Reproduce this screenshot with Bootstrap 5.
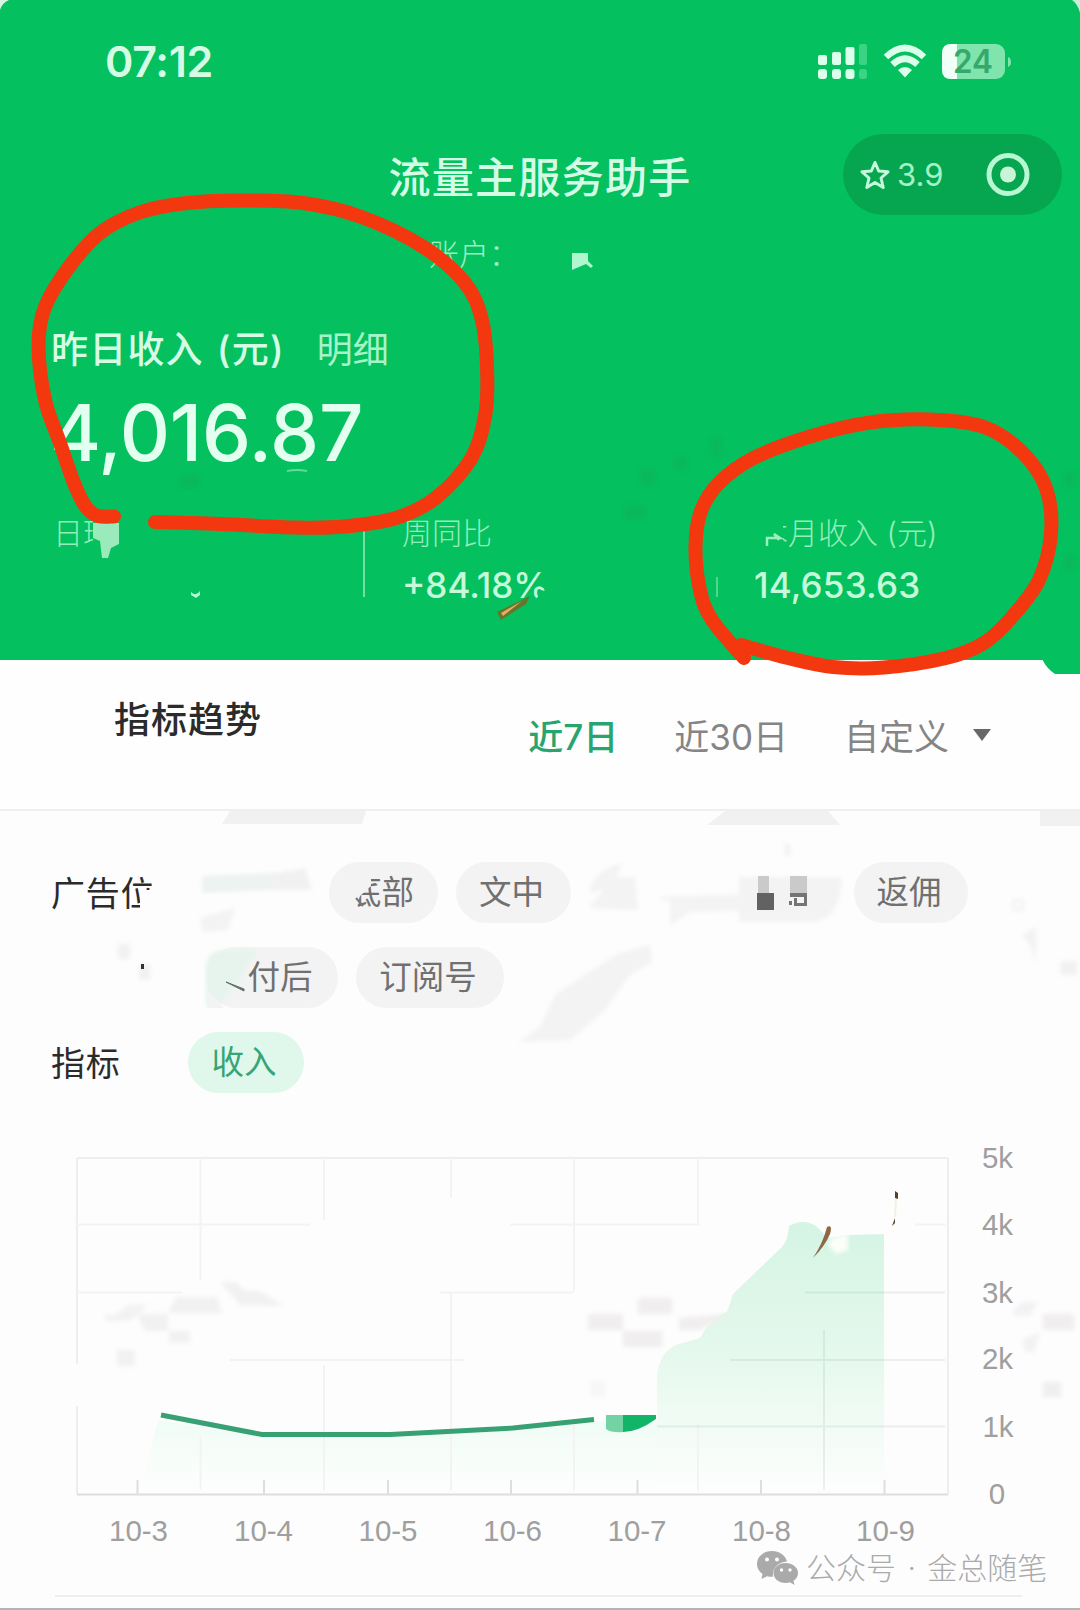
<!DOCTYPE html>
<html lang="zh-CN">
<head>
<meta charset="utf-8">
<meta name="viewport" content="width=device-width, initial-scale=1">
<title>流量主服务助手</title>
<link href="https://cdn.jsdelivr.net/npm/bootstrap@5.3.0/dist/css/bootstrap.min.css" rel="stylesheet">
<style>
body{width:1080px;height:1610px;overflow:hidden;background:#fdfdfd;font-family:Inter,"Noto Sans CJK SC",sans-serif;color:#2b2b2b}
.screen{height:1610px;overflow:hidden;border-bottom:2px solid #b5b5b5}
.hero{height:660px;background:#05c05e;color:#d5fde6}
.status{height:124px;padding:0 69px 0 105px}
.clock{font-size:43px;font-weight:600;letter-spacing:-.3px;line-height:62px;margin-top:-2px}
.titlebar{height:101px;padding-right:18px}
.side{flex:1 1 0}
.app-name{font-size:42px;font-weight:500;letter-spacing:1.3px;padding:5px 0 0 18px}
.capsule{width:219px;height:81px;background:#06a650;padding:0 32px 0 17px}
.rate{font-size:31px;line-height:40px;color:#a3f3c6;margin-left:7px}
.account{height:58px;line-height:59px;font-size:30px;font-weight:300;padding-left:429px;color:#a0f0c3}
.income-head{height:66px;margin-top:34px;padding-left:51px;gap:32px}
.income-label{font-size:37px;font-weight:500;line-height:66px;word-spacing:2px;letter-spacing:1.2px}
.income-link{font-size:36px;color:#a5f4c9;line-height:66px}
.amount{height:100px;line-height:100px;font-size:78px;font-weight:500;padding-left:50px;letter-spacing:-.2px;color:#e2fff0}
.stats{margin-top:24px;padding-left:53px}
.stat-name{font-size:30px;line-height:52px;font-weight:300;color:#93eebb}
.stat-num{font-size:35px;line-height:52px;font-weight:500;color:#c5fadb}
.s1{width:310px}.s2{width:351px;padding-left:37px}
.rule{width:2px;height:66px;margin-top:24px;background:#74dfa4}
.rule-short{width:2px;height:20px;margin-top:70px;background:#4fd78c}
.s3{padding-left:36px}
.s3 .stat-num{letter-spacing:.2px}
.trend{height:151px;border-bottom:2px solid #efefef;padding:0 89px 0 114px;background:#fefefe}
.trend-title{font-size:36px;font-weight:500;line-height:120px;letter-spacing:1px}
.tabs{font-size:35px;line-height:154px;color:#858585}
.tabs .on{color:#28a46f;font-weight:500}
.filters{padding:51px 0 0 51px;height:303px}
.lab{font-size:34px;line-height:64px;height:61px;letter-spacing:.8px}
.chip{height:61px;line-height:62px;border-radius:31px;background:#f3f3f3;color:#707070;font-size:32.5px;text-align:center}
.chip.on{background:#e0f7ec;color:#35a576}
.chip.wide{padding-right:4px}
.line1{margin-bottom:24px}
.chart text{font-family:"Liberation Sans",Arial,sans-serif;font-size:29.5px;fill:#9f9f9f}
.wm{height:50px;padding-left:757px;margin-top:-37px;color:#aaa;font-size:30px;font-weight:300;line-height:50px;word-spacing:3px}
.endline{height:2px;width:967px;margin:2px 0 0 55px;background:#efefef}
.ink{position:absolute;left:0;top:0;pointer-events:none}
</style>
<script src="https://cdn.jsdelivr.net/npm/bootstrap@5.3.0/dist/js/bootstrap.bundle.min.js"></script>
</head>
<body>
<main class="screen position-relative">
<header class="hero">
  <div class="status d-flex align-items-center justify-content-between">
    <span class="clock">07:12</span>
    <svg width="194" height="38" viewBox="817 43 194 38">
      <g fill="#dcffec"><rect x="818" y="55" width="9" height="10" rx="2"/><rect x="832" y="52" width="9" height="13" rx="2"/><rect x="845.500" y="47" width="9" height="18" rx="2"/><rect x="818" y="69" width="9" height="10" rx="3"/><rect x="832" y="69" width="9" height="10" rx="3"/><rect x="845.500" y="69" width="9" height="10" rx="3"/></g>
      <g fill="#3dd384"><rect x="859" y="44" width="8" height="21" rx="2"/><rect x="859" y="69" width="8" height="10" rx="3"/></g>
      <g fill="none" stroke="#dcffec" stroke-width="6.500"><path d="M886 57Q905 39 924 57"/><path d="M892.500 64.500Q905 53 917.500 64.500"/></g>
      <path d="M905 77.500L898 70Q905 64 912 70Z" fill="#dcffec"/>
      <rect x="942" y="44" width="63" height="35" rx="9" fill="#7fe5ac"/><path d="M951 44H957V79H951Q942 79 942 70V53Q942 44 951 44Z" fill="#f0fff7"/><path d="M1008 57Q1011 58 1011 62T1008 67Z" fill="#7fe5ac"/>
      <text x="953" y="73" font-family="Inter" font-weight="600" font-size="32" textLength="40" lengthAdjust="spacingAndGlyphs" fill="#35a86b">24</text>
    </svg>
  </div>
  <div class="titlebar d-flex align-items-center">
    <div class="side"></div>
    <div class="app-name">流量主服务助手</div>
    <div class="side d-flex justify-content-end">
      <div class="capsule rounded-pill d-flex align-items-center">
        <svg width="30" height="30" viewBox="0 0 30 30"><path d="M15 2.500L18.700 11L28 11.800L21 18L23.200 27.500L15 22.500L6.800 27.500L9 18L2 11.800L11.300 11Z" fill="none" stroke="#c4fadb" stroke-width="3" stroke-linejoin="round"/></svg>
        <span class="rate">3.9</span>
        <svg class="ms-auto" width="44" height="44" viewBox="0 0 44 44"><circle cx="22" cy="21.500" r="19" fill="none" stroke="#b7f7d2" stroke-width="5"/><circle cx="22" cy="21.500" r="8" fill="#c9f5d7"/></svg>
      </div>
    </div>
  </div>
  <div class="account">账户：</div>
  <div class="income-head d-flex"><span class="income-label">昨日收入 (元)</span><span class="income-link">明细</span></div>
  <div class="amount">4,016.87</div>
  <div class="stats d-flex">
    <div class="s1"><div class="stat-name">日环</div></div>
    <div class="rule"></div>
    <div class="s2"><div class="stat-name">周同比</div><div class="stat-num">+84.18%</div></div>
    <div class="rule-short"></div>
    <div class="s3"><div class="stat-name"><span class="ms-1">本月收入 (元)</span></div><div class="stat-num">14,653.63</div></div>
  </div>
</header>
<section class="trend d-flex justify-content-between">
  <div class="trend-title">指标趋势</div>
  <div class="tabs d-flex"><span class="on">近7日</span><span class="ms-5 ps-2">近30日</span><span class="ms-5 ps-2">自定义</span><svg class="align-self-center ms-4" width="18" height="12"><path d="M0 0H18L9 12Z" fill="#686868"/></svg></div>
</section>
<section class="filters">
  <div class="d-flex line1"><div class="lab" style="width:278px">广告位</div><div class="chip wide" style="width:109px">底部</div><div class="chip wide" style="width:115px;margin-left:18px">文中</div><div class="chip wide" style="width:114px;margin-left:283px">返佣</div></div>
  <div class="d-flex line1" style="padding-left:155px"><div class="chip ps-3" style="width:132px">付后</div><div class="chip wide" style="width:148px;margin-left:18px">订阅号</div></div>
  <div class="d-flex"><div class="lab" style="width:137px">指标</div><div class="chip on wide" style="width:116px">收入</div></div>
</section>
<svg class="chart d-block" width="1080" height="466" viewBox="0 1114 1080 466">
  <defs><linearGradient id="area" x1="0" y1="1220" x2="0" y2="1490" gradientUnits="userSpaceOnUse"><stop offset="0" stop-color="#d4f4e4"/><stop offset=".45" stop-color="#e3f8ec"/><stop offset=".75" stop-color="#f1fbf5"/><stop offset="1" stop-color="#fdfefd"/></linearGradient>
  <linearGradient id="low" x1="0" y1="1415" x2="0" y2="1490" gradientUnits="userSpaceOnUse"><stop offset="0" stop-color="#effcf5"/><stop offset="1" stop-color="#fdfefd"/></linearGradient>
  <filter id="soft" x="-10%" y="-10%" width="120%" height="120%"><feGaussianBlur stdDeviation="2"/></filter></defs>
  <path d="M140 1490L158 1420L262 1436H390L593 1421H660V1490Z" fill="url(#low)"/>
  <path d="M657 1490V1375Q660 1352 676 1345L700 1338Q712 1316 727 1312L733 1294L760 1268L782 1247Q788 1240 789 1226Q803 1218 816 1226L828 1238L848 1235L884 1234V1490Z" fill="url(#area)"/>
  <path d="M832 1238L848 1233V1250L836 1254L828 1245Z" fill="#fbfef9" filter="url(#soft)"/>
  <g stroke="#eeeeee" stroke-width="2" fill="none">
    <path d="M77 1158H948M948 1158V1494M77 1158V1364M77 1406V1494"/>
    <path d="M77 1224.500H310M510 1224.500H700M915 1224.500H945M77 1292.500H182M440 1292.500H573M230 1360H465" stroke="#f3f3f3"/>
    <path d="M200.500 1158V1280M200.500 1436V1490M324 1158V1220M324 1365V1490M451 1158V1198M451 1292V1490M574 1158V1292M574 1424V1490M698 1158V1224M698 1424V1490" stroke="#f3f3f3"/>
    <path d="M805 1292.500H945M730 1360H945M657 1426.500H945M824 1330V1490" stroke="#789b89" stroke-opacity=".14"/>
    <path d="M77 1494.500H948M137.500 1480V1494M264 1480V1494M388 1480V1494M511 1480V1494M637.500 1480V1494M761 1480V1494M884.500 1480V1494" stroke="#dedede"/>
  </g>
  <g fill="#f1f1f1" filter="url(#soft)"><path d="M176 1297H217L222 1313H168ZM220 1282H236L245 1291H260L283 1306L240 1305ZM137 1314H168V1331H145ZM169 1331H190V1343H169ZM117 1350H135V1366H117Z"/></g>
  <g fill="#f0eeee" filter="url(#soft)"><path d="M588 1314H623V1330H588ZM638 1298H672V1314H638ZM623 1331H662V1347H623ZM679 1318L729 1314L700 1330H679ZM1043 1314H1074V1330H1043ZM1043 1382H1061V1397H1043Z"/><path d="M590 1381H606V1397H590Z" opacity=".4"/></g>
  <path d="M161 1415L262 1434.500H390L513 1428L594 1419.500" fill="none" stroke="#38a173" stroke-width="5"/>
  <path d="M606 1415H623V1432Q612 1433 606 1429Z" fill="#74d3a4"/><path d="M623 1415H656V1419Q638 1432 623 1432Z" fill="#12b568"/>
  <path d="M813 1258Q823 1243 827 1227Q833 1224 830 1234Q825 1246 813 1258Z" fill="#8d6843"/><path d="M895 1191L898 1193L898 1199L895 1198ZM895 1218V1223L892 1226Z" fill="#54422f"/>
  <path d="M896 1199L895 1217" stroke="#f5f0e4" stroke-width="2"/>
  <g text-anchor="middle"><text x="138.500" y="1541">10-3</text><text x="263.500" y="1541">10-4</text><text x="388" y="1541">10-5</text><text x="512.500" y="1541">10-6</text><text x="637" y="1541">10-7</text><text x="761.500" y="1541">10-8</text><text x="885.500" y="1541">10-9</text>
  <text x="997.500" y="1168">5k</text><text x="997.500" y="1235">4k</text><text x="997.500" y="1302.500">3k</text><text x="997.500" y="1369">2k</text><text x="998" y="1436.500">1k</text><text x="997" y="1504">0</text></g>
</svg>
<div class="wm d-flex align-items-center position-relative"><svg width="41" height="34" viewBox="0 0 41 34"><path d="M15 0C6.500 0 0 5.700 0 13C0 17 2 20.500 5.500 23L4.500 28L10 25.200Q13 26 16 25.800C15 17 21 11 30 10.500C28.500 4.500 22.500 0 15 0Z" fill="#aaa"/><path d="M28.500 12C21.500 12 16.500 16.500 16.500 22C16.500 27.800 22 32 28.500 32Q31 32 33 31.300L37.500 34L36.500 29.800C39.500 27.800 41 25 41 22C41 16.500 35.500 12 28.500 12Z" fill="#aaa"/><g fill="#fff"><circle cx="10" cy="8.500" r="2"/><circle cx="20" cy="8.500" r="2"/><circle cx="24.500" cy="19" r="1.700"/><circle cx="33" cy="19" r="1.700"/></g></svg><span class="ms-2">公众号 · 金总随笔</span></div>
<div class="endline position-relative"></div>

<svg class="ink" width="1080" height="1610" viewBox="0 0 1080 1610">
  <path d="M0 0H9Q2 3 0 10Z" fill="#d9f5e5"/><path d="M1080 0H1072Q1078 4 1080 13Z" fill="#c7efd8"/>
  <path d="M1042 659H1080V674H1055Q1047 669 1042 659Z" fill="#05c05e"/>
  <path d="M572 253H588V261L593 266L591 268L586 264L572 270Z" fill="#b0f7d0"/>
  <path d="M287 471Q297 469 307 471" stroke="#5edc98" stroke-width="2" fill="none"/>
  <path d="M96 518H124V566H96Z" fill="#05c05e"/><path d="M93 523H119V544L111 548L108 558H102L100 541L93 538Z" fill="#9beabb"/>
  <path d="M191 592Q196 597 200 591V595L196 598L191 595Z" fill="#b9f7d2"/>
  <path d="M548 565V592L541 590L536 600H552V565Z" fill="#05c05e"/>
  <path d="M750 514H783V552H750Z" fill="#05c05e"/><path d="M767 546V538H780L774 534L779 540" stroke="#9af0c0" stroke-width="2.500" fill="none"/>
  <path d="M497 612L530 596L526 604L501 620Z" fill="#66752c"/><path d="M501 613L522 601L503 616Z" fill="#e9ac63"/>
  <g fill="#0ab258" opacity=".55" filter="url(#soft)"><path d="M710 437H722V457H710ZM674 456H688V470H674ZM640 470H655V485H640ZM624 506H645V519H624ZM1064 472H1075V487H1064ZM1064 555H1075V570H1064ZM180 475H200V488H180Z"/></g>
  <g fill="#f1f1f1"><path d="M230 811H366L362 824H222ZM725 811H828L840 825H707ZM1040 811H1080V826H1040Z"/>
  <g filter="url(#soft)"><path d="M272 874L305 868L312 890H272Z"/><path d="M200 918L235 908L228 930L203 932ZM589 893Q594 869 623 863L616 877H635L638 910L589 908L604 889ZM661 897L754 894L746 910L690 912L670 925V900H661ZM739 877H842Q841 920 812 922H739ZM555 995L617 954L650 945L652 962L630 975L605 1010L570 1040L518 1042L540 1027Z" opacity=".85"/>
  <path d="M118 944H130V959H118ZM139 964H150V980H139ZM1061 961H1077V975H1061ZM785 844H790V856H785Z"/></g></g>
  <path d="M202 876L275 873V890L202 893Z" fill="#edf3f0" filter="url(#soft)"/>
  <path d="M206 1005V963Q210 950 225 950H258L245 970L232 990L218 1006Z" fill="#e6f4ed" filter="url(#soft)"/><path d="M226 982L244 989V991Z" fill="#5e7068" stroke="#5e7068"/>
  <path d="M207 990V1008H224Z" fill="#f3f3f3"/>
  <path d="M143 890H160V913H140V900Z" fill="#fdfdfd"/><path d="M141 964h3v5h-3z" fill="#333"/>
  <path d="M350 872H371V886L360 896L356 908H350Z" fill="#f3f3f3"/><path d="M356 898L363 906" stroke="#777" stroke-width="2"/>
  <path d="M758 876H769V893H758ZM790 876H807V893H790Z" fill="#cacaca"/><path d="M757 893H774V910H757Z" fill="#626262"/><path d="M790 893H807V897H790ZM804 893H807V906H804ZM794 898H797V906H794ZM794 903H806V906H794ZM789 901H792V905H789Z" fill="#747474"/>
  <g fill="#dedede" opacity=".35" filter="url(#soft)"><path d="M1012 899h12v12h-12zm3 3v6h6v-6zM1022 935l14-8v36l-6-18zM1012 1312l10-10h16l-8 14h-14zM1022 1340l18-8-6 20h-8zM105 1315h10l14-10h20l-20 16h-24z" fill-rule="evenodd"/></g>
  <g fill="none" stroke="#f3370f" stroke-width="14" stroke-linecap="round" stroke-linejoin="round">
    <path class="pen" data-pts="155,522 220,524 296,527.500 344,526.500 396,518 437,497 472,457 485.500,413 487,367 482,320 465,283 423.500,247 361.500,217 303,203 241,200.500 182.500,203.500 138,213 100,233 69,267 45,307 38.500,345 45,400 60,443 74,483 86,507 98,516 114,516.500"/>
    <path class="pen" data-pts="744,658 712,620 700,590 695.500,547 701,511 719,483 753.500,458 808.500,437 867,423 929,419.500 984,427 1022,452 1046,488 1051,533 1039,580 1012,617 984,643 946,658 884,667.500 833,667 788,658 741,645"/>
  </g>
</svg>
</main>
<script>
// Smooth pen strokes: Catmull-Rom points converted to cubic Bezier segments
document.querySelectorAll('.pen').forEach(p=>{
  const a=p.dataset.pts.split(' ').map(s=>s.split(',').map(Number));
  let d='M'+a[0];
  for(let i=0;i<a.length-1;i++){
    const p0=a[i-1]||a[i],p1=a[i],p2=a[i+1],p3=a[i+2]||p2;
    d+='C'+[p1[0]+(p2[0]-p0[0])/6,p1[1]+(p2[1]-p0[1])/6,p2[0]-(p3[0]-p1[0])/6,p2[1]-(p3[1]-p1[1])/6,p2[0],p2[1]];
  }
  p.setAttribute('d',d);
});
</script>
</body>
</html>
